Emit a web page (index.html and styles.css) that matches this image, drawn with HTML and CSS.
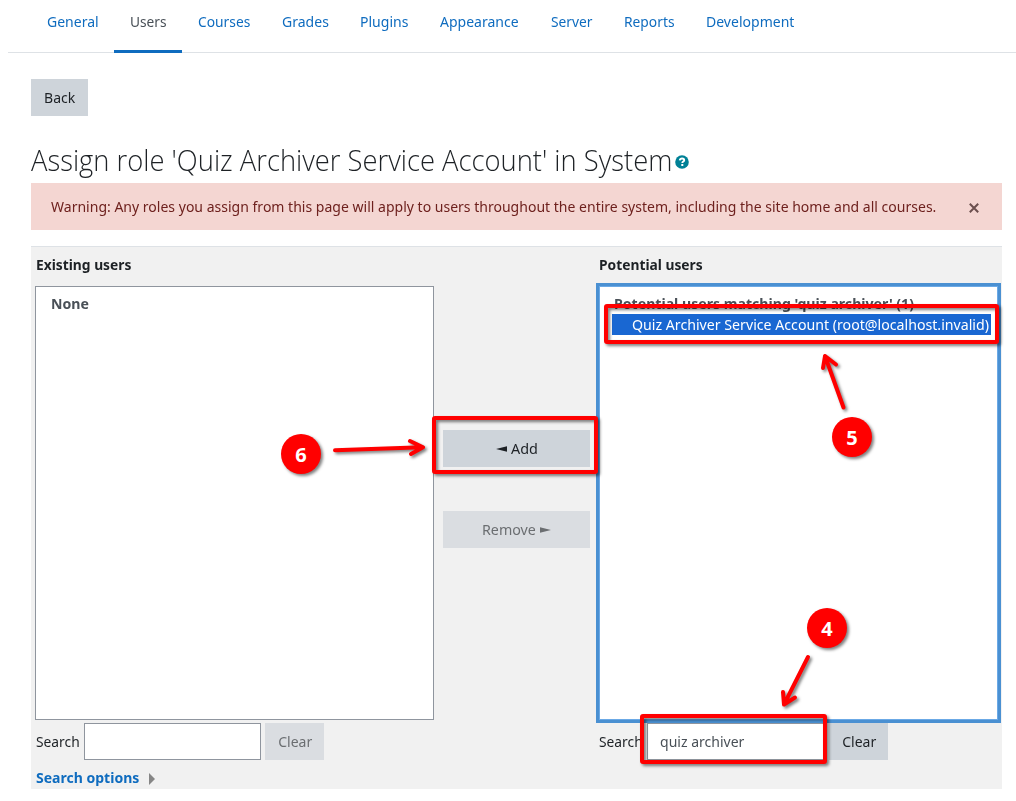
FILE: index.html
```html
<!DOCTYPE html>
<html lang="en">
<head>
<meta charset="utf-8">
<title>Assign role</title>
<link rel="stylesheet" href="styles.css">
</head>
<body>
<nav class="tabs">
<a class="tab general"><span class="t">General</span></a><a class="tab users active"><span class="t">Users</span></a><a class="tab courses"><span class="t">Courses</span></a><a class="tab grades"><span class="t">Grades</span></a><a class="tab plugins"><span class="t">Plugins</span></a><a class="tab appearance"><span class="t">Appearance</span></a><a class="tab server"><span class="t">Server</span></a><a class="tab reports"><span class="t">Reports</span></a><a class="tab development"><span class="t">Development</span></a>
</nav>
<main class="content">
<button class="btn back"><span class="t mid">Back</span></button>
<h2 class="title"><span class="title-text">Assign role 'Quiz Archiver Service Account' in System</span><svg class="help" viewBox="0 0 14 14"><circle cx="7" cy="7" r="6.8" fill="#008196"/><path d="M4.7 5.4C5 4 6 3.5 7.1 3.500c1.300 0 2.100.7 2.100 1.700 0 1.400-1.900 1.400-1.900 2.800" fill="none" stroke="#fff" stroke-width="1.900"/><rect x="6.300" y="9" width="2" height="2" fill="#fff"/></svg></h2>
<div class="alert"><span class="t alert-text">Warning: Any roles you assign from this page will apply to users throughout the entire system, including the site home and all courses.</span><svg class="close" viewBox="0 0 10 10"><path d="M.8.8l8.4 8.4M9.2.8L.8 9.2" stroke="#6b4f4e" stroke-width="2" fill="none"/></svg></div>
<section class="assign">
<div class="column existing">
<label class="heading"><span class="t">Existing users</span></label>
<div class="list"><div class="group"><span class="t">None</span></div></div>
<div class="search"><label class="search-label"><span class="t">Search</span></label><div class="field"></div><button class="btn clear disabled"><span class="t mid">Clear</span></button></div>
<div class="options"><span class="t options-text">Search options</span><svg class="caret" viewBox="0 0 6 12"><path d="M0 0l6 6-6 6z" fill="#868686"/></svg></div>
</div>
<div class="controls">
<button class="btn move"><svg class="arrow" viewBox="0 0 11 6"><path d="M11 .3v5.400L0 3z" fill="#1d2125"/></svg><span class="t add-text">Add</span></button>
<button class="btn move disabled"><span class="t remove-text">Remove</span><svg class="arrow" viewBox="0 0 11 6"><path d="M0 .3v5.400L11 3z" fill="#6b6e71"/></svg></button>
</div>
<div class="column potential">
<label class="heading"><span class="t">Potential users</span></label>
<div class="list focused"><div class="group"><span class="t">Potential users matching 'quiz archiver' (1)</span></div><div class="option"><span class="t">Quiz Archiver Service Account (root@localhost.invalid)</span></div></div>
<div class="search"><label class="search-label"><span class="t">Search</span></label><div class="field"><span class="t">quiz archiver</span></div><button class="btn clear"><span class="t mid">Clear</span></button></div>
</div>
</section>
</main>
<svg class="annotations" viewBox="0 0 1016 801">
<g class="marks">
<rect x="434" y="418" width="162" height="54" rx="1"/>
<rect x="606" y="306" width="391" height="36" rx="1"/>
<rect x="642" y="716" width="183" height="46" rx="1"/>
<path d="M335 450.300l87-3M410 441l13 6.300-12 6.700"/>
<path d="M843.500 407.500L825 356M823 368l2-12 11 8.500"/>
<path d="M808 657l-24 47.500M783 692l1 12.500 11-7"/>
</g>
<g class="badges"><circle cx="301" cy="454" r="20"/><circle cx="852" cy="437" r="20"/><circle cx="827" cy="628" r="20"/></g>
<g class="numbers"><text x="301" y="461.500">6</text><text x="852" y="444.500">5</text><text x="827" y="635.500">4</text></g>
</svg>
</body>
</html>
```
FILE: styles.css
```css
* { box-sizing: border-box; }
body { margin: 0; height: 801px; overflow: hidden; background: #fff; color: #1d2125; font: 15px/22px "Noto Sans", sans-serif; position: relative; }
/* Narrowed text setting used across the page */
.t { display: inline-block; flex: none; white-space: nowrap; transform: scaleX(.935); transform-origin: 0 50%; }
.mid { transform-origin: 50% 50%; }
.tabs { display: flex; height: 53px; margin-left: 8px; padding-left: 23px; border-bottom: 1px solid #dee2e6; }
.tab { flex: none; height: 53px; padding: 10px 0 0 16px; color: #0f6cbf; border-bottom: 3px solid transparent; }
.tab.active { color: #495057; border-color: #0f6cbf; }
.general { width: 83px; }
.users { width: 68px; }
.users .t { transform: scaleX(.915); }
.courses { width: 84px; }
.grades { width: 78px; }
.plugins { width: 80px; }
.appearance { width: 111px; }
.server { width: 73px; }
.server .t, .reports .t, .courses .t { transform: scaleX(.92); }
.reports { width: 82px; }
.development { width: 121px; }
.content { padding: 26px 14px 0 31px; }
.btn { display: flex; align-items: center; justify-content: center; height: 37px; padding: 0 12px 2px; border: 0; background: #ced4da; color: #1d2125; font: inherit; }
.back { width: 57px; }
.disabled { background: #dadde1; color: #6b6e71; }
.title { display: flex; height: 38px; margin: 25px 0 4px; font-family: "Open Sans", sans-serif; font-size: 30px; line-height: 38px; font-weight: 300; white-space: nowrap; }
.title-text { width: 642px; transform: scaleX(.912); transform-origin: 0 50%; }
.help { width: 14px; height: 14px; margin: 14px 0 0 2px; }
.alert { display: flex; align-items: center; justify-content: space-between; height: 47px; padding: 0 23px 0 20px; background: #f4d6d2; color: #6e211e; }
.alert-text { width: 885px; padding-bottom: 1px; }
.close { width: 10px; height: 10px; margin-top: 3px; }
.assign { display: flex; height: 543px; margin-top: 16px; padding-left: 4px; border-top: 1px solid #dee2e6; background: #f1f1f1; }
.column { width: 399px; }
.potential { margin-left: -1px; }
.heading { display: block; height: 39px; padding: 6px 0 0 1px; font-weight: 700; }
.heading .t { transform: scaleX(.92); }
.list { height: 434px; padding: 6px; border: 1px solid #8f959e; background: #fff; color: #495057; }
.group { height: 21px; padding-left: 9px; line-height: 21px; font-weight: 700; }
.group .t { transform: scaleX(.941); }
.option { height: 21px; margin-left: 6px; padding-left: 20px; line-height: 21px; background: #1967d2; color: #fff; }
.option .t { transform: scaleX(.944); }
.focused { width: 399px; margin-left: 1px; border: 1px solid #6ba9e6; box-shadow: 0 0 0 3px #4a90d2; }
.focused .group { padding-left: 8px; }
.search { display: flex; align-items: center; height: 37px; margin-top: 3px; }
.search-label { flex: none; width: 49px; padding: 0 0 2px 1px; }
.search-label .t { transform: scaleX(.92); }
.field { flex: none; width: 177px; height: 37px; margin-right: 4px; padding: 6px 12px; border: 1px solid #8f959e; background: #fff; color: #495057; }
.potential .field { width: 178px; }
.clear { width: 59px; padding: 0 11px 2px 12px; }
.existing .clear { padding: 0 10px 2px 12px; }
.options { display: flex; align-items: center; margin-top: 6px; padding-left: 1px; color: #0f6cbf; font-weight: 700; }
.options-text { width: 113px; }
.caret { width: 6px; height: 12px; margin-top: 3px; }
.controls { flex: none; width: 165px; padding: 183px 9px 0; }
.move { width: 147px; gap: 4px; }
.move + .move { margin-top: 44px; }
.add-text { transform: scaleX(.96); }
.remove-text { width: 54px; transform: scaleX(.95); }
.arrow { width: 11px; height: 6px; margin-top: 2px; }
.move:first-child { padding-left: 13px; padding-right: 11px; }
.annotations { position: absolute; inset: 0; width: 1016px; height: 801px; pointer-events: none; }
.marks { fill: none; stroke: #f00; stroke-width: 4; stroke-linecap: round; stroke-linejoin: round; filter: drop-shadow(2px 2px 1.5px rgba(0,0,0,.5)); }
.badges { fill: #f00; filter: drop-shadow(2px 2px 1.5px rgba(0,0,0,.5)); }
.numbers { fill: #fff; font-size: 20px; font-weight: 700; text-anchor: middle; }
```
